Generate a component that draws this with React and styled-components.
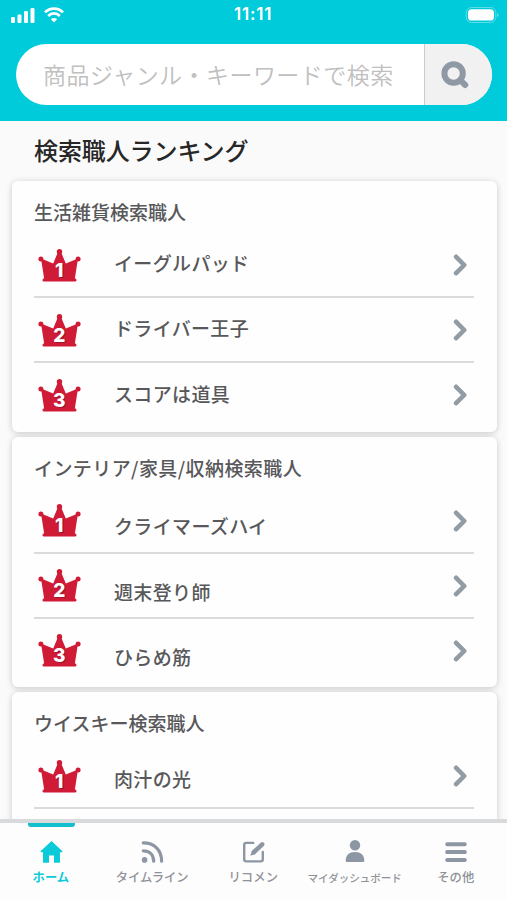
import React from 'react';
import styled, { createGlobalStyle } from 'styled-components';

const GlobalStyle = createGlobalStyle`
  * { box-sizing: border-box; }
  body {
    margin: 0;
    background: #fafafa;
    font-family: "Noto Sans CJK JP", sans-serif;
  }
  button { font: inherit; border: 0; margin: 0; padding: 0; background: none; }
`;

const Screen = styled.div`
  width: 507px;
  height: 900px;
  display: flex;
  flex-direction: column;
  overflow: hidden;
  background: #fafafa;
`;

const Header = styled.header`
  flex: none;
  height: 121px;
  background: #00cbdb;
`;

const StatusBar = styled.div`
  height: 44px;
  padding: 0 8px 15px 11px;
  display: grid;
  grid-template-columns: 223px 1fr 36px;
  align-items: center;
  color: #fff;
`;

const Signals = styled.div`
  display: flex;
  align-items: center;
  gap: 9px;
`;

const Clock = styled.time`
  font: 600 17px/29px Inter, sans-serif;
  letter-spacing: 0.8px;
`;

const BatterySlot = styled.div`
  display: flex;
  justify-content: flex-end;
`;

const SearchBar = styled.form`
  display: flex;
  width: 476px;
  height: 61px;
  margin-left: 16px;
  border-radius: 31px;
  overflow: hidden;
  background: #fff;
`;

const SearchInput = styled.input`
  width: 408px;
  padding: 0 0 2px 27px;
  border: 0;
  outline: 0;
  background: transparent;
  font: 350 23px "Noto Sans CJK JP", sans-serif;
  letter-spacing: 0.45px;
  &::placeholder { color: #c0c0c0; opacity: 1; }
`;

const SearchButton = styled.button`
  flex: 1;
  display: flex;
  align-items: center;
  padding-left: 16px;
  border-left: 1px solid #c9cccd;
  background: #f1f1f1;
`;

const Content = styled.main`
  flex: none;
  height: 698px;
  overflow: hidden;
`;

const PageTitle = styled.h1`
  margin: 0;
  height: 60px;
  padding: 0 34px;
  font-size: 24px;
  font-weight: 500;
  line-height: 57px;
  letter-spacing: -0.1px;
  color: #272727;
`;

const Card = styled.section`
  width: 485px;
  height: 250.5px;
  margin: 0 0 5px 11.5px;
  padding: 0 22.5px;
  border-radius: 6px;
  background: #fefefe;
  box-shadow: 0 1px 6px rgba(0, 0, 0, 0.2);
`;

const CardTitle = styled.h2`
  margin: 0;
  height: 52px;
  font-size: 19px;
  font-weight: 500;
  line-height: 62px;
  letter-spacing: ${({ $track }) => $track}px;
  color: #58585a;
`;

const RankRow = styled.div`
  display: grid;
  grid-template-columns: 80px 1fr 21px;
  height: 65px;
  padding-left: 4px;
  border-bottom: ${({ $last }) => ($last ? 'none' : '2px solid #dadbdc')};
`;

const RankBadge = styled.div`
  padding-top: 15.5px;
  line-height: 0;
`;

const RankName = styled.span`
  padding-top: ${({ $drop }) => $drop}px;
  font-size: 19px;
  font-weight: 500;
  line-height: 60px;
  letter-spacing: 0.35px;
  height: 60px;
  margin-left: -4px;
  color: #58585a;
`;

const Chevron = styled.div`
  padding-top: 21px;
  line-height: 0;
`;

const TabBar = styled.nav`
  flex: none;
  height: 81px;
  display: grid;
  grid-template-columns: repeat(5, 101.25px);
  padding-left: 0.75px;
  border-top: 4px solid #d9dadb;
  background: #fdfdfd;
`;

const Tab = styled.button`
  display: flex;
  flex-direction: column;
  align-items: center;
  color: ${({ $active }) => ($active ? '#0bcbd9' : '#8d96a3')};
`;

const Marker = styled.span`
  width: 47px;
  height: 4px;
  border-radius: 0 0 3px 3px;
  background: ${({ $active }) => ($active ? '#12bfcd' : 'transparent')};
`;

const TabIcon = styled.span`
  height: 41px;
  padding-top: 13px;
  line-height: 0;
`;

const TabLabel = styled.span`
  font-size: ${({ $size }) => $size}px;
  font-weight: ${({ $active }) => ($active ? 700 : 500)};
  line-height: 19px;
  letter-spacing: ${({ $track }) => $track}px;
  margin-left: -1px;
  white-space: nowrap;
  color: ${({ $active }) => ($active ? '#0bcbd9' : '#8f9297')};
`;

const CellularIcon = () => (
  <svg width="24" height="16" viewBox="0 0 24 16" fill="#fff">
    <rect x="0" y="10" width="4" height="6" rx="1.3" />
    <rect x="6.5" y="7.5" width="4" height="8.5" rx="1.3" />
    <rect x="13" y="4" width="4" height="12" rx="1.3" />
    <rect x="19.5" y="1" width="4" height="15" rx="1.3" />
  </svg>
);

const WifiIcon = () => (
  <svg width="20" height="16" viewBox="0 0 20 16" fill="none" stroke="#fff" strokeWidth="2.7">
    <path d="M1 5.4C6 .4 14 .4 19 5.4" />
    <path d="M4.2 9c3.3-3.4 8.3-3.4 11.6 0" />
    <path d="M6.9 12.2c1.8-1.7 4.4-1.7 6.2 0L10 15.5z" fill="#fff" stroke="none" />
  </svg>
);

const BatteryIcon = () => (
  <svg width="34" height="16" viewBox="0 0 34 16">
    <rect x="1.3" y=".5" width="29.5" height="15" rx="5" fill="none" stroke="#5fdce7" />
    <rect x="3" y="2.3" width="26" height="11.2" rx="3.6" fill="#fff" />
    <path d="M32.3 5.8c1.6.7 1.6 3.7 0 4.4z" fill="#7ee3ec" />
  </svg>
);

const SearchIcon = () => (
  <svg width="28" height="28" viewBox="0 0 28 28" fill="none" stroke="#8e99a5">
    <circle cx="12.6" cy="12.5" r="9.2" strokeWidth="6" />
    <path d="M19 19 24.2 24" strokeWidth="6" strokeLinecap="round" />
  </svg>
);

const Crown = ({ rank }) => (
  <svg width="43" height="40" viewBox="0 0 43 40">
    <g fill="#d01b37">
      <circle cx="21.5" cy="2.8" r="2.7" />
      <circle cx="2.9" cy="10" r="2.5" />
      <circle cx="40.1" cy="10" r="2.5" />
      <path d="M3 9.5 15.2 14.5 20 3h3l4.8 11.5L40 9.5 36.7 30.5H6.3z" />
      <rect x="4.6" y="29.5" width="33.8" height="3" rx="1.3" />
    </g>
    <g fontFamily="Inter, sans-serif" fontWeight="800" fontSize="19" textAnchor="middle">
      <text x="22.2" y="28.8" fill="#9c1430">{rank}</text>
      <text x="21.2" y="28.2" fill="#fff">{rank}</text>
    </g>
  </svg>
);

const ChevronIcon = () => (
  <svg width="16" height="22" viewBox="0 0 16 22" fill="none" stroke="#929ca5" strokeWidth="4.6" strokeLinecap="round" strokeLinejoin="round">
    <path d="M3.1 2.8 11.2 11 3.1 19.2" />
  </svg>
);

const HomeIcon = () => (
  <svg width="23" height="24" viewBox="0 0 23 24" fill="currentColor">
    <path d="M11.5 1.1 22.2 10.9Q23 12 21.8 12.3H20v10.5H14V15.5H9v7.3H3V12.3H1.2Q0 12 .8 10.9z" />
  </svg>
);

const FeedIcon = () => (
  <svg width="23" height="24" viewBox="0 0 23 24" fill="none" stroke="currentColor" strokeWidth="3.2" strokeLinecap="round">
    <circle cx="3.6" cy="19.9" r="2.8" fill="currentColor" stroke="none" />
    <path d="M2.3 10.8c6.2 0 10.4 4 10.4 10.4M2.3 2.9c11 0 18.3 7 18.3 18.3" />
  </svg>
);

const ComposeIcon = () => (
  <svg width="24" height="24" viewBox="0 0 24 24" fill="none" stroke="currentColor" strokeWidth="2.4">
    <path d="M11.2 2.9H4.3Q2.2 2.9 2.2 5V19.3Q2.2 21.4 4.3 21.4H18.7Q20.8 21.4 20.8 19.3V12" strokeLinecap="round" />
    <path d="M12 12 20.2 4.3" strokeWidth="4.5" strokeLinecap="round" />
    <path d="M10.2 10.6 13.6 14 8.2 15.8z" fill="currentColor" stroke="none" />
  </svg>
);

const PersonIcon = () => (
  <svg width="20" height="24" viewBox="0 0 20 24" fill="currentColor">
    <circle cx="10" cy="5.2" r="5.2" />
    <path d="M.7 20.8C.7 15 4.2 12 10 12s9.3 3 9.3 8.8Q19.3 22 18.2 22H1.8Q.7 22 .7 20.8z" />
  </svg>
);

const MenuIcon = () => (
  <svg width="22" height="24" viewBox="0 0 22 24" fill="currentColor">
    <rect x=".3" y="2.2" width="21.4" height="4" rx="1.7" />
    <rect x=".3" y="10.1" width="21.4" height="4" rx="1.7" />
    <rect x=".3" y="18" width="21.4" height="4" rx="1.7" />
  </svg>
);

const rankings = [
  { title: '生活雑貨検索職人', names: ['イーグルパッド', 'ドライバー王子', 'スコアは道具'], drops: [0, 0, 1], track: 0 },
  { title: 'インテリア/家具/収納検索職人', names: ['クライマーズハイ', '週末登り師', 'ひらめ筋'], drops: [7, 8, 8], track: 0.42 },
  { title: 'ウイスキー検索職人', names: ['肉汁の光'], drops: [5], track: 0 },
];

const tabs = [
  { label: 'ホーム', Icon: HomeIcon, size: 12.3, track: 0, active: true },
  { label: 'タイムライン', Icon: FeedIcon, size: 12.3, track: 0 },
  { label: 'リコメン', Icon: ComposeIcon, size: 12.3, track: 0.2 },
  { label: 'マイダッシュボード', Icon: PersonIcon, size: 10.5, track: 0 },
  { label: 'その他', Icon: MenuIcon, size: 12.3, track: 0.2 },
];

export default function App() {
  return (
    <Screen>
      <GlobalStyle />
      <Header>
        <StatusBar>
          <Signals><CellularIcon /><WifiIcon /></Signals>
          <Clock>11:11</Clock>
          <BatterySlot><BatteryIcon /></BatterySlot>
        </StatusBar>
        <SearchBar>
          <SearchInput placeholder="商品ジャンル・キーワードで検索" />
          <SearchButton type="button" aria-label="検索"><SearchIcon /></SearchButton>
        </SearchBar>
      </Header>
      <Content>
        <PageTitle>検索職人ランキング</PageTitle>
        {rankings.map(({ title, names, drops, track }) => (
          <Card key={title}>
            <CardTitle $track={track}>{title}</CardTitle>
            {names.map((name, i) => (
              <RankRow key={name} $last={i === 2}>
                <RankBadge><Crown rank={i + 1} /></RankBadge>
                <RankName $drop={drops[i]}>{name}</RankName>
                <Chevron><ChevronIcon /></Chevron>
              </RankRow>
            ))}
          </Card>
        ))}
      </Content>
      <TabBar>
        {tabs.map(({ label, Icon, size, track, active }) => (
          <Tab key={label} type="button" $active={active}>
            <Marker $active={active} />
            <TabIcon><Icon /></TabIcon>
            <TabLabel $size={size} $track={track} $active={active}>{label}</TabLabel>
          </Tab>
        ))}
      </TabBar>
    </Screen>
  );
}
